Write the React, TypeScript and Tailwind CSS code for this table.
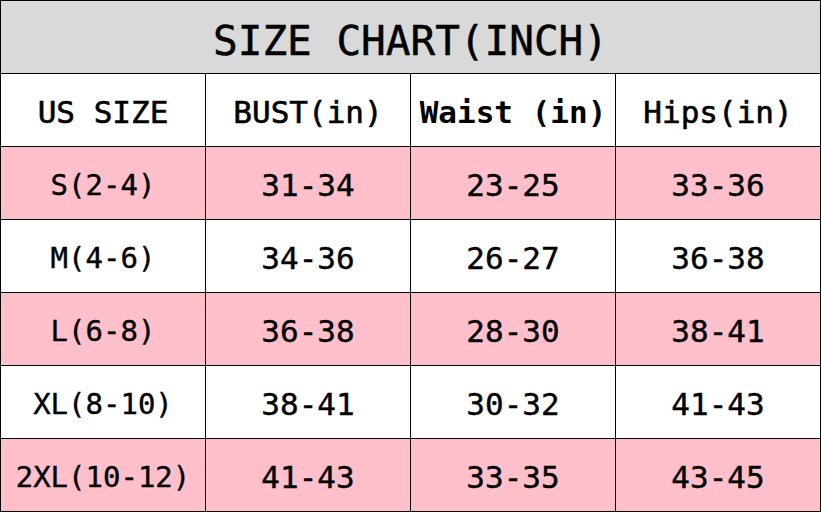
const HEADERS = [
  { label: "US SIZE", bold: false },
  { label: "BUST(in)", bold: false },
  { label: "Waist (in)", bold: true },
  { label: "Hips(in)", bold: false },
];

const ROWS = [
  { size: "S(2-4)", bust: "31-34", waist: "23-25", hips: "33-36", pink: true },
  { size: "M(4-6)", bust: "34-36", waist: "26-27", hips: "36-38", pink: false },
  { size: "L(6-8)", bust: "36-38", waist: "28-30", hips: "38-41", pink: true },
  { size: "XL(8-10)", bust: "38-41", waist: "30-32", hips: "41-43", pink: false },
  { size: "2XL(10-12)", bust: "41-43", waist: "33-35", hips: "43-45", pink: true },
];

const cell =
  "h-[73px] border-r border-b border-black flex items-center justify-center text-black";

export default function App() {
  return (
    <div
      className="w-[821px] h-[512px] border-t border-l border-black bg-white"
      style={{ fontFamily: '"DejaVu Sans Mono", "Liberation Mono", monospace' }}
    >
      <div className="h-[73px] border-r border-b border-black bg-[#d9d9d9] flex items-center justify-center">
        <span className="text-[41px] leading-none text-black pt-2 [-webkit-text-stroke:0.5px_#000]">
          SIZE CHART(INCH)
        </span>
      </div>

      <div className="grid grid-cols-4">
        {HEADERS.map((h) => (
          <div key={h.label} className={`${cell} bg-white`}>
            <span
              className={`text-[31px] leading-none pt-1 ${
                h.bold ? "font-bold" : "[-webkit-text-stroke:0.6px_#000]"
              }`}
            >
              {h.label}
            </span>
          </div>
        ))}

        {ROWS.map((r) => (
          <div key={r.size} className="contents">
            <div className={`${cell} ${r.pink ? "bg-[#ffc0cb]" : "bg-white"}`}>
              <span className="text-[29px] leading-none pt-1 [-webkit-text-stroke:0.4px_#000]">
                {r.size}
              </span>
            </div>
            <div className={`${cell} ${r.pink ? "bg-[#ffc0cb]" : "bg-white"}`}>
              <span className="text-[31px] leading-none pt-1 [-webkit-text-stroke:0.4px_#000]">
                {r.bust}
              </span>
            </div>
            <div className={`${cell} ${r.pink ? "bg-[#ffc0cb]" : "bg-white"}`}>
              <span className="text-[31px] leading-none pt-1 [-webkit-text-stroke:0.4px_#000]">
                {r.waist}
              </span>
            </div>
            <div className={`${cell} ${r.pink ? "bg-[#ffc0cb]" : "bg-white"}`}>
              <span className="text-[31px] leading-none pt-1 [-webkit-text-stroke:0.4px_#000]">
                {r.hips}
              </span>
            </div>
          </div>
        ))}
      </div>
    </div>
  );
}
